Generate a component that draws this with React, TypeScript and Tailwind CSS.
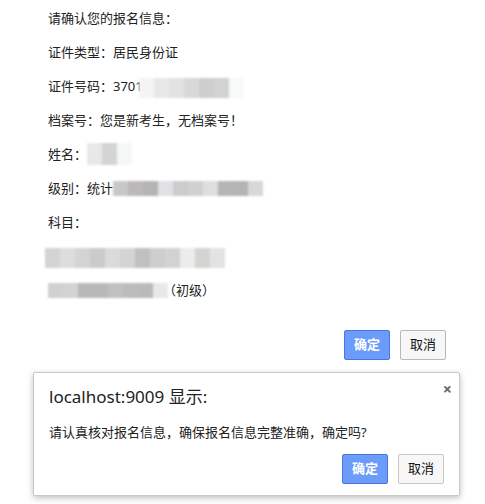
import React from 'react'

const font = "font-['Noto_Sans','Noto_Sans_CJK_SC',sans-serif]"

function Mosaic({ cells, h = 'h-[15px]' }: { cells: string[]; h?: string }) {
    return (
        <span className={`inline-flex align-middle blur-[1px] ${h}`}>
            {cells.map((c, i) => (
                <span key={i} className={`w-[15px] h-full ${c}`} />
            ))}
        </span>
    )
}

function Line({ children }: { children: React.ReactNode }) {
    return <div className="h-[34px] leading-[34px] flex items-center whitespace-nowrap">{children}</div>
}

export default function App() {
    return (
        <div className={`relative w-[485px] h-[504px] overflow-hidden bg-white text-[13px] text-[#222] ${font}`}>
            <div className="pl-[48px] pt-[1px]">
                <Line>请确认您的报名信息：</Line>
                <Line>证件类型：居民身份证</Line>
                <Line>
                    证件号码：3701
                    <span className="-ml-[4px]">
                        <Mosaic h="h-[20px]" cells={['bg-[#f4f4f4]', 'bg-[#e8e8e8]', 'bg-[#e2e2e2]', 'bg-[#d8d8d8]', 'bg-[#cecece]', 'bg-[#d2d2d2]', 'bg-[#f8f9fb]']} />
                    </span>
                </Line>
                <Line>档案号：您是新考生，无档案号！</Line>
                <Line>
                    姓名：
                    <Mosaic h="h-[22px]" cells={['bg-[#e8e8e8]', 'bg-[#d4d4d4]', 'bg-[#f4f6f8]']} />
                </Line>
                <Line>
                    级别：统计
                    <Mosaic cells={['bg-[#c8c8c8]', 'bg-[#bcb8b8]', 'bg-[#b4b4b4]', 'bg-[#e0e1e5]', 'bg-[#cccccc]', 'bg-[#d0d0d0]', 'bg-[#dedede]', 'bg-[#b6b4b4]', 'bg-[#b4b4b4]', 'bg-[#d8d8d8]']} />
                </Line>
                <Line>科目：</Line>
                <Line>
                    <span className="-ml-[3px]">
                        <Mosaic h="h-[20px]" cells={['bg-[#d4d4d4]', 'bg-[#dedddd]', 'bg-[#d4d4d4]', 'bg-[#cccaca]', 'bg-[#d9dadc]', 'bg-[#d6d4d2]', 'bg-[#c0c0c2]', 'bg-[#cecece]', 'bg-[#d2d2d2]', 'bg-[#ececec]', 'bg-[#d6d4d2]', 'bg-[#e2e3e5]']} />
                    </span>
                </Line>
                <Line>
                    <Mosaic cells={['bg-[#d0d0d0]', 'bg-[#d4d2d2]', 'bg-[#b8b8b8]', 'bg-[#b8b8ba]', 'bg-[#c0c0c0]', 'bg-[#bcbcbc]', 'bg-[#bababa]', 'bg-[#e8e8e8]']} />
                    <span className="ml-[-5px]">（初级）</span>
                </Line>

                <div className="flex justify-end gap-[10px] pr-[39px] mt-[23px]">
                    <button className="w-[46px] h-[30px] rounded-[2px] border border-[#4a78d8] bg-[#6b9bfb] text-white font-bold text-[13px]">确定</button>
                    <button className="w-[46px] h-[30px] rounded-[2px] border border-[#b8b8b8] bg-[#f7f7f7] text-[#111] text-[13px]">取消</button>
                </div>

                <div className="mt-[117px] flex gap-[40px] text-[#333] text-[13px] leading-[18px]">
                    <span className="ml-[40px]">操作：</span>
                    <span className="text-[#2a5caa]">修改报名信息</span>
                </div>
            </div>

            <div className="absolute left-[33px] top-[372px] w-[427px] h-[124px] bg-white border border-[#c8c8c8] rounded-[2px] shadow-[0_2px_6px_rgba(0,0,0,0.25)] px-[15px]">
                <div className="flex justify-between items-start pt-[12px]">
                    <div className="text-[17px] text-[#222] leading-[24px]">localhost:9009 显示:</div>
                    <div className="text-[#666] text-[16px] font-bold leading-none mt-[-4px] mr-[-8px]">×</div>
                </div>
                <div className="mt-[14px] text-[13px] text-[#222] leading-[18px]">请认真核对报名信息，确保报名信息完整准确，确定吗?</div>
                <div className="flex justify-end gap-[10px] mt-[13px]">
                    <button className="w-[46px] h-[30px] rounded-[2px] border border-[#4a78d8] bg-[#6b9bfb] text-white font-bold text-[13px]">确定</button>
                    <button className="w-[46px] h-[30px] rounded-[2px] border border-[#c8c8c8] bg-[#f7f7f7] text-[#111] text-[13px]">取消</button>
                </div>
            </div>
        </div>
    )
}
